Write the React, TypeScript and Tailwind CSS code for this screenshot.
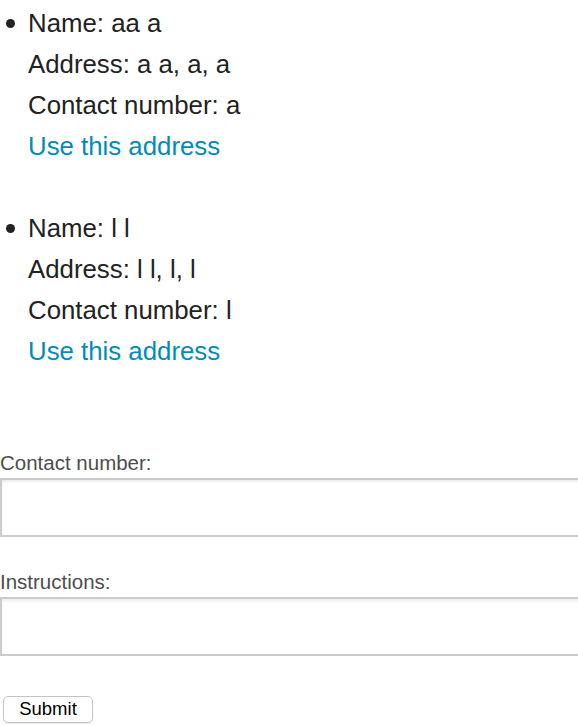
import React from "react";

type Address = {
  name: string;
  address: string;
  contact: string;
};

const addresses: Address[] = [
  { name: "aa a", address: "a a, a, a", contact: "a" },
  { name: "l l", address: "l l, l, l", contact: "l" },
];

function AddressItem({ item }: { item: Address }) {
  return (
    <li className="flex">
      <span className="w-[28px] shrink-0 flex items-start">
        <span className="mt-[16px] ml-[6px] block w-[9px] h-[9px] rounded-full bg-[#222222]" />
      </span>
      <div className="flex flex-col">
        <span>Name: {item.name}</span>
        <span>Address: {item.address}</span>
        <span>Contact number: {item.contact}</span>
        <a href="#" className="text-[#008cba] no-underline">
          Use this address
        </a>
      </div>
    </li>
  );
}

export default function App() {
  return (
    <div
      className="w-full min-h-[726px] overflow-hidden bg-white"
      style={{ fontFamily: '"Liberation Sans", Arial, Helvetica, sans-serif' }}
    >
      <ul className="pt-[3px] flex flex-col gap-[41px] text-[25.8px] leading-[41px] text-[#222222]">
        {addresses.map((a, i) => (
          <AddressItem key={i} item={a} />
        ))}
      </ul>

      <form className="mt-[76px] flex flex-col" onSubmit={(e) => e.preventDefault()}>
        <label className="text-[20.5px] leading-[30px] text-[#4d4d4d]">Contact number:</label>
        <input
          type="text"
          className="w-[640px] h-[59px] border-2 border-[#cccccc] bg-white shadow-[inset_0_2px_3px_rgba(0,0,0,0.08)] outline-none"
        />

        <label className="mt-[30px] text-[20.5px] leading-[30px] text-[#4d4d4d]">Instructions:</label>
        <input
          type="text"
          className="w-[640px] h-[59px] border-2 border-[#cccccc] bg-white shadow-[inset_0_2px_3px_rgba(0,0,0,0.08)] outline-none"
        />

        <div className="mt-[40px] pl-[3px]">
          <button
            type="submit"
            className="w-[90px] h-[27px] rounded-[5px] border border-[#c4c4c4] bg-white text-[18.5px] leading-none text-black shadow-[0_1px_1px_rgba(0,0,0,0.08)]"
          >
            Submit
          </button>
        </div>
      </form>
    </div>
  );
}
